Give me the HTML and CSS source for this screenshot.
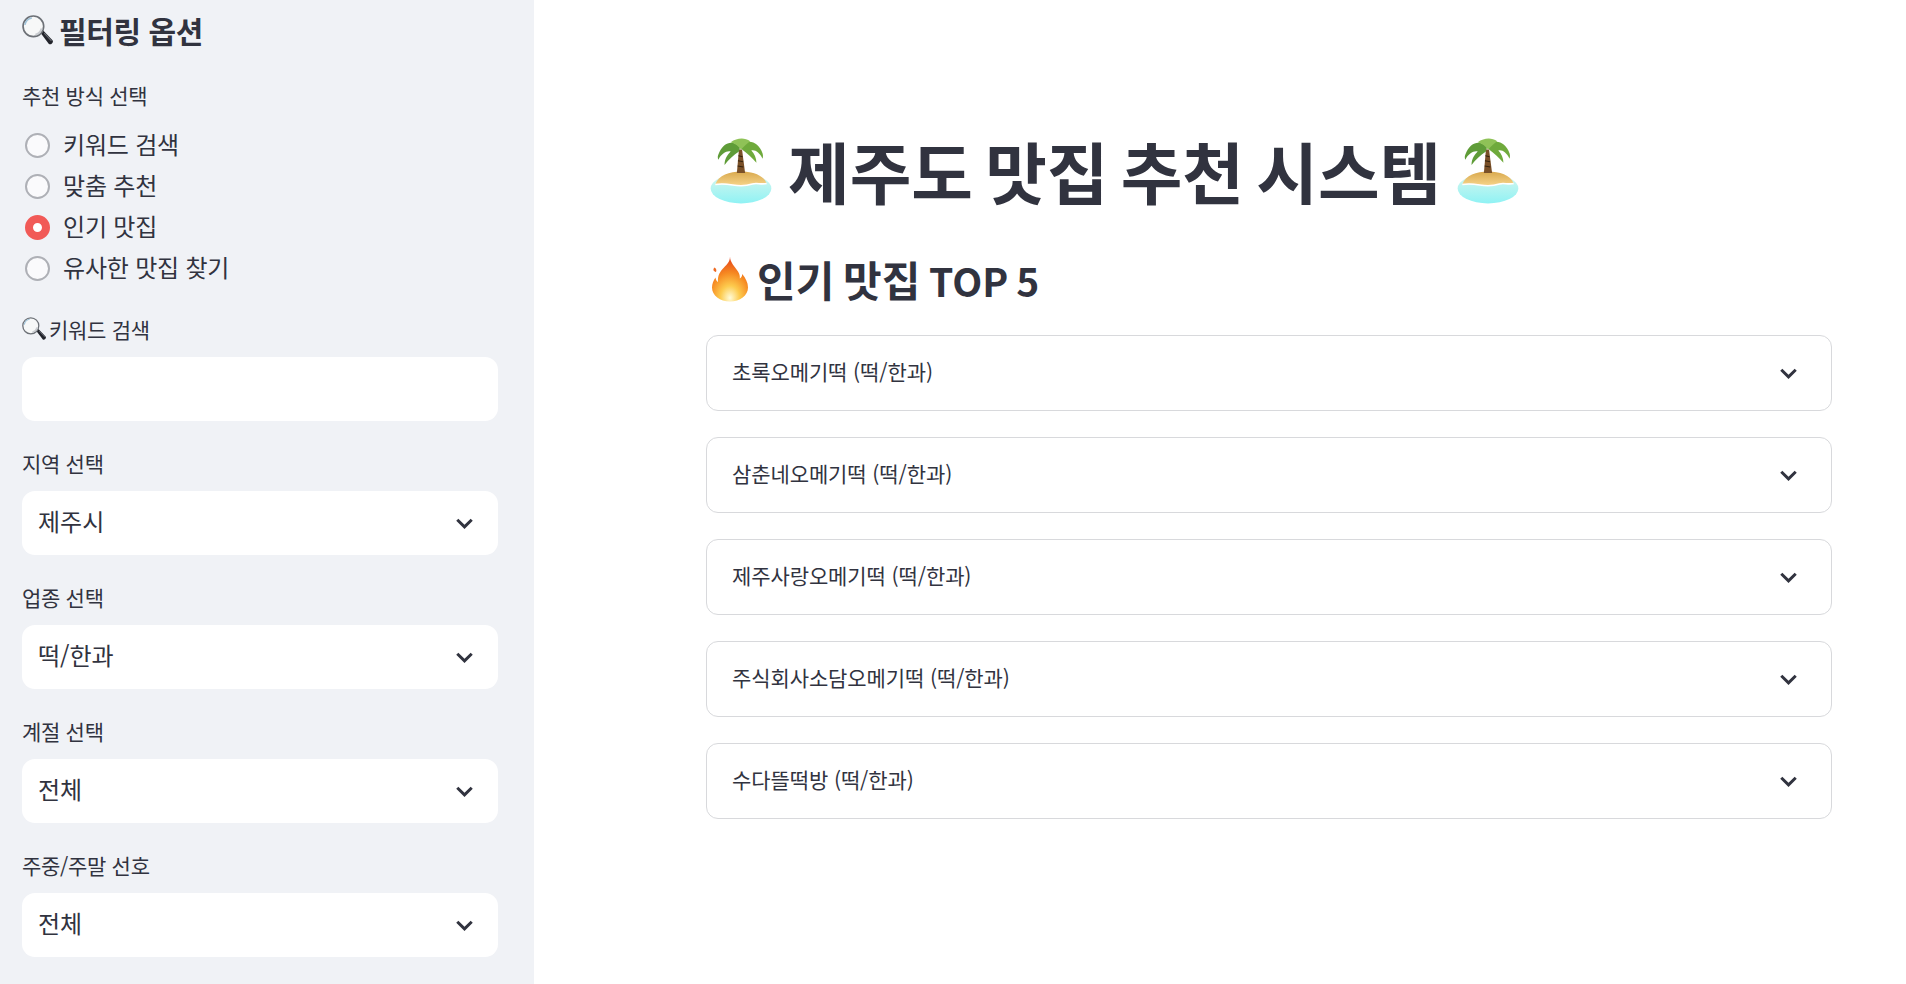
FILE: index.html
```html
<!DOCTYPE html>
<html lang="ko">

<head>
    <meta charset="UTF-8">
    <title>제주도 맛집 추천 시스템</title>
    <link rel="stylesheet" href="styles.css">
</head>

<body>
    <svg class="icon-defs" width="0" height="0" aria-hidden="true">
        <defs>
            <linearGradient id="sandFill" x1="0" y1="0" x2="0" y2="1">
                <stop offset="0" stop-color="#d9a94e" />
                <stop offset="1" stop-color="#f6d48a" />
            </linearGradient>
            <linearGradient id="seaFill" x1="0" y1="0" x2="0" y2="1">
                <stop offset="0" stop-color="#d8f6ee" />
                <stop offset="1" stop-color="#8ff2f4" />
            </linearGradient>
            <radialGradient id="flameFill" cx="0.5" cy="0.92" r="0.9">
                <stop offset="0" stop-color="#fffbd8" />
                <stop offset="0.3" stop-color="#fdcb4e" />
                <stop offset="0.62" stop-color="#f68a22" />
                <stop offset="1" stop-color="#e5401a" />
            </radialGradient>
            <symbol id="iconLens" viewBox="0 0 30 30">
                <path d="M18 17.500l2.500-2.500 9 9.500q1 1.500-.5 3t-3 .5z" fill="#22242b" />
                <path d="M21.500 17.500l7 7.500" stroke="#6c7078" stroke-width="1" />
                <circle cx="11" cy="11" r="10" fill="#f7f8f8" stroke="#6d7177" stroke-width="1.600" />
                <path d="M2.800 9.500A8.500 8.500 0 0 1 9.500 2.800" fill="none" stroke="#9fc3da" stroke-width="1.500" />
                <path d="M19 13A8.500 8.500 0 0 1 13 19" fill="none" stroke="#c9ccd0" stroke-width="2" />
            </symbol>
            <symbol id="iconIsland" viewBox="0 0 60 70">
                <ellipse cx="30" cy="54" rx="29.500" ry="14.500" fill="url(#seaFill)" />
                <path d="M5 50c3-9 14-12.500 25-12.500S52 41 55 49c-6 1.500-9-1-14 .5-6 2-13 2-19 1-6-1-11-1.500-17-.5z" fill="url(#sandFill)" />
                <path d="M5 50c6-1 11-.5 17 .5 6 1 13 1 19-1 5-1.500 8 1 14-.5" fill="none" stroke="#fff" stroke-width="1.500" />
                <path d="M28 16l-2 23h8l-3-23z" fill="#7a5028" />
                <path d="M27.500 22l4 1M27 27l5 1M26.800 32l5.500 1" stroke="#35230f" stroke-width="1" />
                <path d="M29 14C24 7 13 7 8 21c-1 2-.5 4 0 5 3-6 8-9 12-8-3 3-6 7-6 13 4-5 9-10 14-13z" fill="#5f9c38" />
                <path d="M30 14c4-9 17-7 21 6 .5 2 .5 3 0 5-3-6-7-9-11-8 3 3 5 7 5 12-4-5-9-9-14-13z" fill="#6faa3c" />
                <path d="M20 9c6-4 13-5 19-1-3 2-6 5-9 8-2-3-6-6-10-7z" fill="#8fc257" />
            </symbol>
            <symbol id="iconFlame" viewBox="0 0 36 45">
                <path d="M18 0c0 6 5 10 8 15 1.500 2.500 2 4.500 1.800 7 1.500-.8 2.400-2.500 2.400-4.500C33.500 21.500 36 26 36 31c0 8-8 14-18 14S0 39 0 31c0-4 1.500-7 3.500-10 .3 2 1 3.500 2.500 4.500C5.500 19 8 15 12 11c3-3 6-6 6-11z" fill="url(#flameFill)" />
                <path d="M2.500 11c1.500 1 2.500 2.500 1.500 4.500-2.500-.5-3.500-2.500-1.500-4.500z" fill="#ee6a22" />
            </symbol>
            <symbol id="iconChevron" viewBox="0 0 16 10">
                <path d="M1.200 1.500L8 8.200l6.800-6.700" fill="none" stroke="#31333f" stroke-width="2.800" />
            </symbol>
        </defs>
    </svg>

    <div class="app">
        <aside class="sidebar">
            <h2 class="sidebar-title">
                <svg class="emoji-lens-lg"><use href="#iconLens" /></svg>필터링 옵션
            </h2>

            <div class="field-label radio-label">추천 방식 선택</div>
            <div class="radio-group">
                <div class="radio-row"><span class="radio"></span>키워드 검색</div>
                <div class="radio-row"><span class="radio"></span>맞춤 추천</div>
                <div class="radio-row"><span class="radio radio-on"></span>인기 맛집</div>
                <div class="radio-row"><span class="radio"></span>유사한 맛집 찾기</div>
            </div>

            <div class="field-label keyword-label">
                <svg class="emoji-lens-sm"><use href="#iconLens" /></svg>키워드 검색
            </div>
            <div class="text-input"></div>

            <div class="field-label">지역 선택</div>
            <div class="select-box"><span class="select-value">제주시</span><svg class="chevron"><use href="#iconChevron" /></svg></div>

            <div class="field-label">업종 선택</div>
            <div class="select-box"><span class="select-value">떡/한과</span><svg class="chevron"><use href="#iconChevron" /></svg></div>

            <div class="field-label">계절 선택</div>
            <div class="select-box"><span class="select-value">전체</span><svg class="chevron"><use href="#iconChevron" /></svg></div>

            <div class="field-label">주중/주말 선호</div>
            <div class="select-box"><span class="select-value">전체</span><svg class="chevron"><use href="#iconChevron" /></svg></div>
        </aside>

        <main class="content">
            <h1 class="page-title">
                <svg class="emoji-island"><use href="#iconIsland" /></svg>
                <span>제주도 맛집 추천 시스템</span>
                <svg class="emoji-island"><use href="#iconIsland" /></svg>
            </h1>
            <h2 class="section-title">
                <svg class="emoji-flame"><use href="#iconFlame" /></svg>
                <span>인기 맛집 <span class="latin">TOP 5</span></span>
            </h2>

            <div class="expander"><span class="expander-name">초록오메기떡 (떡/한과)</span><svg class="chevron"><use href="#iconChevron" /></svg></div>
            <div class="expander"><span class="expander-name">삼춘네오메기떡 (떡/한과)</span><svg class="chevron"><use href="#iconChevron" /></svg></div>
            <div class="expander"><span class="expander-name">제주사랑오메기떡 (떡/한과)</span><svg class="chevron"><use href="#iconChevron" /></svg></div>
            <div class="expander"><span class="expander-name">주식회사소담오메기떡 (떡/한과)</span><svg class="chevron"><use href="#iconChevron" /></svg></div>
            <div class="expander"><span class="expander-name">수다뜰떡방 (떡/한과)</span><svg class="chevron"><use href="#iconChevron" /></svg></div>
        </main>
    </div>
</body>

</html>
```
FILE: styles.css
```css
html,
body {
    height: 100%;
}

body {
    margin: 0;
    overflow: hidden;
    background-color: #fff;
    color: #31333f;
    font-family: "Noto Sans CJK KR", "Noto Sans", sans-serif;
}

.icon-defs {
    display: block;
}

.app {
    display: flex;
    height: 984px;
}

.sidebar {
    width: 534px;
    flex-shrink: 0;
    box-sizing: border-box;
    padding: 8px 36px 0 22px;
    background-color: #f0f2f6;
}

.sidebar-title {
    display: flex;
    align-items: center;
    gap: 6px;
    height: 44px;
    margin: 0;
    font-size: 30px;
    font-weight: 700;
    letter-spacing: -0.4px;
}

.emoji-lens-lg {
    width: 31px;
    height: 31px;
}

.emoji-lens-sm {
    width: 24px;
    height: 24px;
    margin-right: 3px;
}

.field-label {
    display: flex;
    align-items: center;
    height: 26px;
    margin: 29px 0 15px;
    font-size: 21px;
    letter-spacing: -0.3px;
}

.radio-label {
    margin: 30px 0 19px;
}

.keyword-label {
    margin: 34px 0 15px;
}

.radio-group {
    display: flex;
    flex-direction: column;
    gap: 9px;
}

.radio-row {
    display: flex;
    align-items: center;
    gap: 13px;
    height: 32px;
    padding-left: 3px;
    font-size: 24px;
    letter-spacing: -0.2px;
}

.radio {
    box-sizing: border-box;
    width: 25px;
    height: 25px;
    margin-top: 4px;
    border: 2px solid #aeb0b6;
    border-radius: 50%;
    background-color: #fafafc;
}

.radio-on {
    border: 8px solid #f15a57;
    background-color: #fff;
}

.text-input,
.select-box {
    box-sizing: border-box;
    height: 64px;
    border-radius: 13px;
    background-color: #fff;
}

.select-box {
    display: flex;
    align-items: center;
    justify-content: space-between;
    padding: 0 25px 0 16px;
    font-size: 24px;
}

.select-value {
    margin-bottom: 6px;
}

.chevron {
    width: 17px;
    height: 11px;
    flex-shrink: 0;
}

.content {
    flex: 1;
    padding: 123px 74px 0 172px;
}

.page-title {
    display: flex;
    align-items: center;
    gap: 16px;
    height: 92px;
    margin: 0;
    padding-left: 4px;
    font-size: 67px;
    font-weight: 700;
    word-spacing: -6.500px;
}

.emoji-island {
    width: 62px;
    height: 72px;
}

.section-title {
    display: flex;
    align-items: center;
    gap: 9px;
    height: 60px;
    margin: 33px 0 27px;
    padding-left: 6px;
    font-size: 42px;
    font-weight: 700;
    word-spacing: -3px;
}

.latin {
    font-size: 39px;
}

.emoji-flame {
    width: 36px;
    height: 46px;
    margin-top: 2px;
}

.expander {
    display: flex;
    align-items: center;
    justify-content: space-between;
    box-sizing: border-box;
    height: 76px;
    margin-bottom: 26px;
    padding: 0 34px 0 25px;
    border: 1.500px solid #d8d9dc;
    border-radius: 12px;
    font-size: 21px;
    letter-spacing: -0.1px;
}

.expander-name {
    margin-bottom: 5px;
}
```
